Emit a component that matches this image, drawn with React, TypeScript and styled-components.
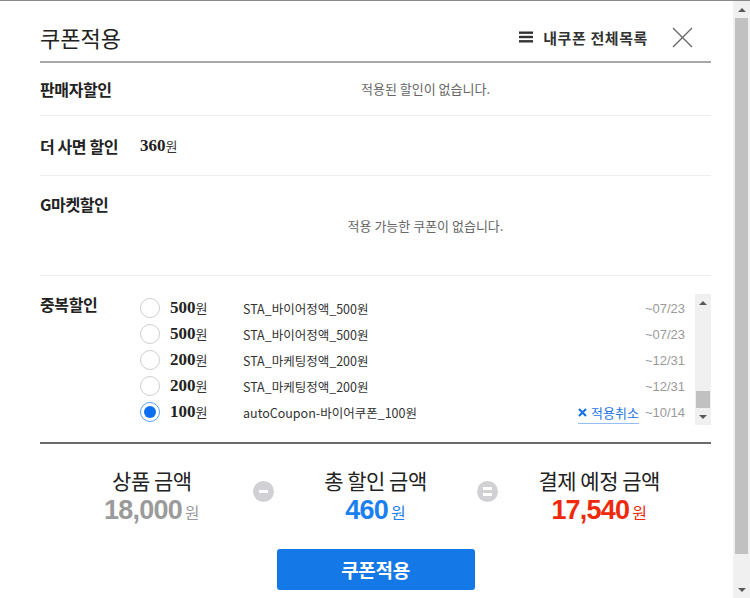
import React from 'react';
import styled, { createGlobalStyle } from 'styled-components';

const GlobalStyle = createGlobalStyle`
  html, body {
    margin: 0;
    padding: 0;
    background: #fff;
  }
  body {
    font-family: "Noto Sans CJK KR", "Noto Sans", sans-serif;
    color: #222;
  }
  * {
    box-sizing: border-box;
  }
`;

const Frame = styled.div`
  display: flex;
  width: 750px;
  height: 598px;
  overflow: hidden;
  border-top: 1px solid #8a8a8a;
`;

const Content = styled.div`
  flex: 1;
  min-width: 0;
  padding: 0 22px 0 40px;
`;

const Header = styled.header`
  display: flex;
  align-items: center;
  height: 62px;
  padding-top: 12px;
  border-bottom: 2px solid #a8a8a8;
`;

const Title = styled.h1`
  flex: 1;
  margin: 0;
  font-size: 22px;
  font-weight: 400;
  line-height: 1;
  color: #222;
`;

const MenuLink = styled.a`
  display: flex;
  align-items: center;
  gap: 10px;
  font-size: 15px;
  font-weight: 700;
  color: #333;
  letter-spacing: 0.6px;
  text-decoration: none;
`;

const CloseButton = styled.button`
  display: flex;
  margin: 0 18px 0 24px;
  padding: 0;
  border: 0;
  background: none;
`;

const Row = styled.section<{ $top: number; $bottom: number; $last?: boolean }>`
  display: grid;
  grid-template-columns: 100px 1fr;
  padding: ${p => p.$top}px 0 ${p => p.$bottom}px;
  border-bottom: ${p => (p.$last ? '2px solid #6a6a6a' : '1px solid #eeeeee')};
`;

const Label = styled.div`
  font-size: 16px;
  font-weight: 700;
  line-height: 20px;
  color: #222;
  letter-spacing: -0.4px;
`;

const Empty = styled.div<{ $gap?: number }>`
  margin-top: ${p => p.$gap ?? 0}px;
  font-size: 13px;
  line-height: 20px;
  color: #666;
  text-align: center;
`;

const PriceLine = styled.div`
  display: flex;
  align-items: baseline;
  height: 20px;
  line-height: 20px;
`;

const Price = styled.span`
  font-family: "Liberation Serif", serif;
  font-size: 17px;
  font-weight: 700;
  color: #222;
`;

const SmallWon = styled.span`
  font-family: "Noto Sans CJK KR", sans-serif;
  font-size: 13px;
  font-weight: 400;
  color: #333;
`;

const CouponBox = styled.div`
  display: flex;
  height: 131px;
`;

const CouponList = styled.ul`
  flex: 1;
  margin: 0;
  padding: 1px 10px 0 0;
  list-style: none;
`;

const CouponItem = styled.li`
  display: flex;
  align-items: center;
  height: 26px;
`;

const Radio = styled.span<{ $checked?: boolean }>`
  display: flex;
  align-items: center;
  justify-content: center;
  flex: none;
  width: 20px;
  height: 20px;
  margin-right: 10px;
  border-radius: 50%;
  border: 1px solid ${p => (p.$checked ? '#5aa2f5' : '#cfcfcf')};
  background: #fff;

  &::after {
    content: '';
    display: ${p => (p.$checked ? 'block' : 'none')};
    width: 12px;
    height: 12px;
    border-radius: 50%;
    background: #0b6ff0;
  }
`;

const Amount = styled(PriceLine)`
  width: 73px;
  flex: none;
`;

const CouponName = styled.span`
  flex: 1;
  font-size: 12.5px;
  color: #333;
  white-space: nowrap;
`;

const CancelLink = styled.a`
  display: flex;
  align-items: center;
  gap: 4px;
  margin: 4px 6px 0 0;
  padding-bottom: 2px;
  font-size: 13px;
  line-height: 16px;
  color: #1a73e8;
  border-bottom: 1px solid #93bff4;
  text-decoration: none;
`;

const DateText = styled.span`
  font-family: "Liberation Sans", sans-serif;
  font-size: 13px;
  color: #9a9a9a;
`;

const ScrollTrack = styled.div<{ $width: number }>`
  display: flex;
  flex-direction: column;
  flex: none;
  width: ${p => p.$width}px;
  background: #f0f0f0;
`;

const ScrollButton = styled.div`
  display: flex;
  align-items: center;
  justify-content: center;
  height: 17px;
  flex: none;
`;

const Arrow = styled.span<{ $down?: boolean }>`
  width: 0;
  height: 0;
  border-left: 4px solid transparent;
  border-right: 4px solid transparent;
  ${p => (p.$down ? 'border-top: 4px solid #5a5a5a;' : 'border-bottom: 4px solid #5a5a5a;')}
`;

const ScrollArea = styled.div<{ $end?: boolean }>`
  display: flex;
  flex-direction: column;
  justify-content: ${p => (p.$end ? 'flex-end' : 'flex-start')};
  flex: 1;
`;

const Thumb = styled.div<{ $size: number; $inset: number }>`
  height: ${p => p.$size}px;
  margin: 0 ${p => p.$inset}px;
  background: #c1c1c1;
`;

const Summary = styled.div`
  display: flex;
  padding-top: 23px;
`;

const SumColumn = styled.div`
  flex: 1;
  text-align: center;
`;

const SumLabel = styled.div`
  font-size: 21px;
  line-height: 26px;
  color: #222;
  letter-spacing: -0.5px;
`;

const SumAmount = styled.div<{ $tone: string }>`
  margin-top: 2px;
  font-family: "Liberation Sans", Arial, sans-serif;
  font-size: 27px;
  font-weight: 700;
  line-height: 30px;
  color: ${p => p.$tone};
  letter-spacing: -0.8px;
`;

const Won = styled.span`
  margin-left: 3px;
  font-family: "Noto Sans CJK KR", sans-serif;
  font-size: 16px;
  font-weight: 400;
  letter-spacing: 0;
`;

const Operator = styled.div`
  display: flex;
  justify-content: center;
  width: 0;
`;

const OperatorCircle = styled.span`
  display: flex;
  flex-direction: column;
  align-items: center;
  justify-content: center;
  gap: 3px;
  flex: none;
  width: 21px;
  height: 21px;
  margin-top: 14px;
  border-radius: 50%;
  background: #d1d1d5;
`;

const Bar = styled.span`
  width: 9px;
  height: 3px;
  background: #fff;
`;

const ButtonRow = styled.div`
  display: flex;
  justify-content: center;
  margin-top: 22px;
`;

const ApplyButton = styled.button`
  width: 198px;
  height: 41px;
  border: 0;
  border-radius: 3px;
  background: #1479e6;
  color: #fff;
  font-family: "Noto Sans CJK KR", sans-serif;
  font-size: 19px;
  font-weight: 700;
  letter-spacing: -0.3px;
`;

const coupons = [
  { amount: 500, name: 'STA_바이어정액_500원', until: '~07/23' },
  { amount: 500, name: 'STA_바이어정액_500원', until: '~07/23' },
  { amount: 200, name: 'STA_마케팅정액_200원', until: '~12/31' },
  { amount: 200, name: 'STA_마케팅정액_200원', until: '~12/31' },
  { amount: 100, name: 'autoCoupon-바이어쿠폰_100원', until: '~10/14', applied: true },
];

const summary = [
  { label: '상품 금액', value: '18,000', tone: '#9b9b9b' },
  { label: '총 할인 금액', value: '460', tone: '#1a7ff0' },
  { label: '결제 예정 금액', value: '17,540', tone: '#ef2a0c' },
];

const HamburgerIcon = () => (
  <svg width="14" height="12" viewBox="0 0 14 12">
    <rect x="0" y="0.5" width="14" height="2.4" fill="#333" />
    <rect x="0" y="4.8" width="14" height="2.4" fill="#333" />
    <rect x="0" y="9.1" width="14" height="2.4" fill="#333" />
  </svg>
);

const CloseIcon = () => (
  <svg width="21" height="21" viewBox="0 0 21 21">
    <path d="M1 1 L20 20 M20 1 L1 20" stroke="#6a6a6a" strokeWidth="1.4" fill="none" />
  </svg>
);

const CrossMark = () => (
  <svg width="9" height="9" viewBox="0 0 9 9">
    <path d="M1 1 L8 8 M8 1 L1 8" stroke="#1a73e8" strokeWidth="2.2" fill="none" />
  </svg>
);

export default function App() {
  return (
    <>
      <GlobalStyle />
      <Frame>
        <Content>
          <Header>
            <Title>쿠폰적용</Title>
            <MenuLink>
              <HamburgerIcon />
              내쿠폰 전체목록
            </MenuLink>
            <CloseButton aria-label="닫기">
              <CloseIcon />
            </CloseButton>
          </Header>

          <Row $top={16} $bottom={16}>
            <Label>판매자할인</Label>
            <Empty>적용된 할인이 없습니다.</Empty>
          </Row>

          <Row $top={20} $bottom={19}>
            <Label>더 사면 할인</Label>
            <PriceLine>
              <Price>360</Price>
              <SmallWon>원</SmallWon>
            </PriceLine>
          </Row>

          <Row $top={18} $bottom={39}>
            <Label>G마켓할인</Label>
            <Empty $gap={22}>적용 가능한 쿠폰이 없습니다.</Empty>
          </Row>

          <Row $top={18} $bottom={17} $last>
            <Label>중복할인</Label>
            <CouponBox>
              <CouponList>
                {coupons.map((c, i) => (
                  <CouponItem key={i}>
                    <Radio $checked={c.applied} />
                    <Amount>
                      <Price>{c.amount}</Price>
                      <SmallWon>원</SmallWon>
                    </Amount>
                    <CouponName>{c.name}</CouponName>
                    {c.applied && (
                      <CancelLink>
                        <CrossMark />
                        적용취소
                      </CancelLink>
                    )}
                    <DateText>{c.until}</DateText>
                  </CouponItem>
                ))}
              </CouponList>
              <ScrollTrack $width={16}>
                <ScrollButton>
                  <Arrow />
                </ScrollButton>
                <ScrollArea $end>
                  <Thumb $size={17} $inset={1} />
                </ScrollArea>
                <ScrollButton>
                  <Arrow $down />
                </ScrollButton>
              </ScrollTrack>
            </CouponBox>
          </Row>

          <Summary>
            {summary.map((s, i) => (
              <React.Fragment key={s.label}>
                {i > 0 && (
                  <Operator>
                    <OperatorCircle>
                      <Bar />
                      {i === 2 && <Bar />}
                    </OperatorCircle>
                  </Operator>
                )}
                <SumColumn>
                  <SumLabel>{s.label}</SumLabel>
                  <SumAmount $tone={s.tone}>
                    {s.value}
                    <Won>원</Won>
                  </SumAmount>
                </SumColumn>
              </React.Fragment>
            ))}
          </Summary>

          <ButtonRow>
            <ApplyButton>쿠폰적용</ApplyButton>
          </ButtonRow>
        </Content>

        <ScrollTrack $width={17}>
          <ScrollButton>
            <Arrow />
          </ScrollButton>
          <ScrollArea>
            <Thumb $size={536} $inset={2} />
          </ScrollArea>
          <ScrollButton>
            <Arrow $down />
          </ScrollButton>
        </ScrollTrack>
      </Frame>
    </>
  );
}
